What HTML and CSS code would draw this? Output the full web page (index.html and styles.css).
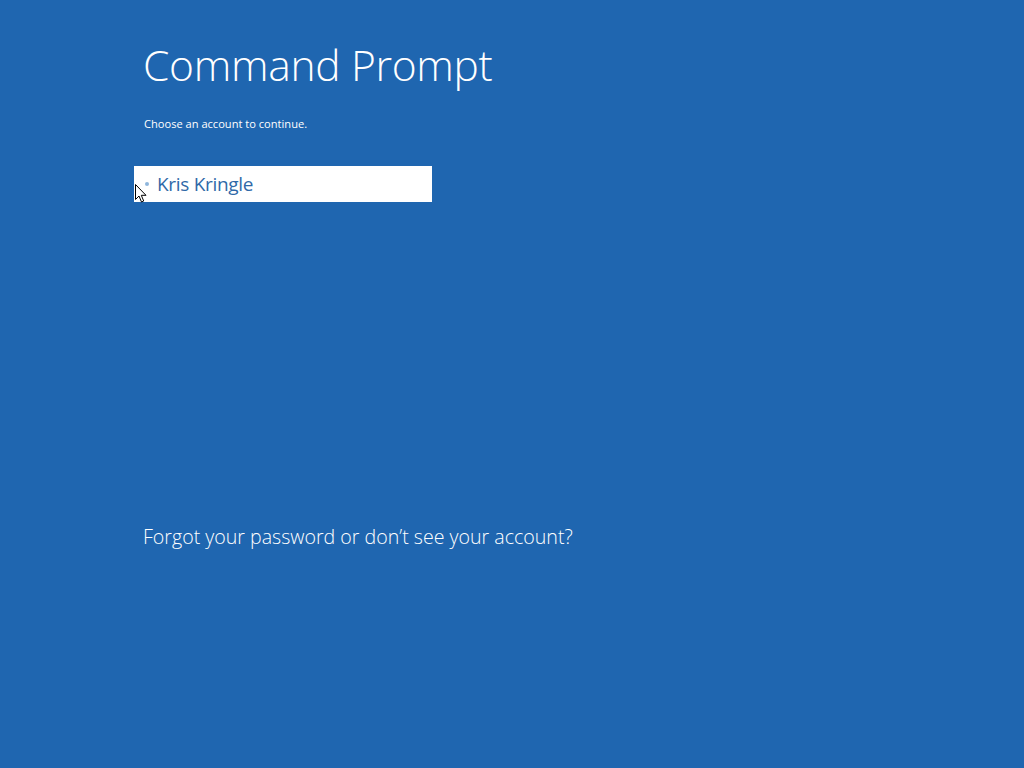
FILE: index.html
```html
<!DOCTYPE html>
<html lang="en">
<head>
    <meta charset="UTF-8">
    <title>Command Prompt</title>
    <link rel="stylesheet" href="styles.css">
</head>
<body>
    <div class="screen">
        <h1 class="title">Command Prompt</h1>
        <p class="hint">Choose an account to continue.</p>
        <div class="accounts">
            <div class="account">
                <span class="dot"></span>
                <span class="name">Kris Kringle</span>
                <svg class="cursor" width="12" height="19" viewBox="0 0 12 19">
                    <path d="M0.5 0.5 L0.5 15.5 L4 12 L6.5 18 L8.7 17 L6.3 11.3 L11 11.3 Z" fill="#fff" stroke="#000" stroke-width="1"/>
                </svg>
            </div>
        </div>
        <a class="forgot" href="#">Forgot your password or don’t see your account?</a>
    </div>
</body>
</html>
```

FILE: styles.css
```css
html, body {
    margin: 0;
    padding: 0;
    height: 100%;
}
body {
    background: #1f66b0;
    color: #fff;
    font-family: "Open Sans", "Noto Sans", sans-serif;
}
.screen {
    padding: 35px 0 0 143px;
}
.title {
    margin: 0;
    font-weight: 300;
    font-size: 42.5px;
    line-height: 60px;
    letter-spacing: -0.3px;
}
.hint {
    margin: 21px 0 0 1px;
    font-size: 11.1px;
    line-height: 16px;
}
.accounts {
    margin: 34px 0 0 -9px;
}
.account {
    position: relative;
    display: flex;
    align-items: center;
    width: 298px;
    height: 36px;
    background: #fff;
    box-sizing: border-box;
    padding-left: 11px;
}
.dot {
    width: 4px;
    height: 4px;
    border-radius: 50%;
    background: #8fb6dc;
    margin-right: 8px;
}
.name {
    color: #3069a8;
    font-size: 19px;
    font-weight: 400;
    letter-spacing: -0.3px;
}
.cursor {
    position: absolute;
    left: 1px;
    top: 18px;
}
.forgot {
    display: inline-block;
    margin-top: 322px;
    color: #fff;
    text-decoration: none;
    font-size: 19.6px;
    font-weight: 300;
    line-height: 26px;
}
```
